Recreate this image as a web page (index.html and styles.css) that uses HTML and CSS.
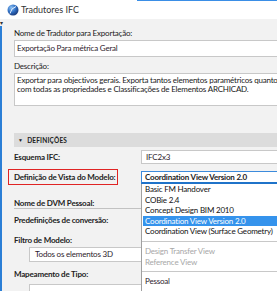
FILE: index.html
```html
<!DOCTYPE html>
<html lang="pt">
<head>
<meta charset="utf-8">
<title>Tradutores IFC</title>
<link rel="stylesheet" href="styles.css">
</head>
<body>
<div class="window">
  <div class="titlebar">
    <svg class="app-icon" width="12" height="12" viewBox="0 0 12 12">
      <defs>
        <radialGradient id="g" cx="0.35" cy="0.3" r="0.8">
          <stop offset="0" stop-color="#8fc3f5"/>
          <stop offset="0.5" stop-color="#2f6fc4"/>
          <stop offset="1" stop-color="#17306b"/>
        </radialGradient>
      </defs>
      <circle cx="6" cy="6" r="5.5" fill="url(#g)"/>
      <path d="M3 9.5 Q4 4 9 2.5" stroke="#e8f2ff" stroke-width="1" fill="none"/>
    </svg>
    <span class="title">Tradutores IFC</span>
  </div>
  <div class="body">
    <span class="corner">&#9662;</span>
    <div class="panel">
      <div class="label">Nome de Tradutor para Exportação:</div>
      <div class="field wide">Exportação Para métrica Geral</div>
      <div class="label lbl-desc">Descrição:</div>
      <div class="textarea">Exportar para objectivos gerais. Exporta tantos elementos paramétricos quanto<br>com todas as propriedades e Classificações de Elementos ARCHICAD.</div>

      <div class="section"><span class="tri">&#9660;</span>DEFINIÇÕES</div>

      <div class="row row-esq">
        <div class="label strong">Esquema IFC:</div>
        <div class="field side">IFC2x3</div>
      </div>
      <div class="row row-def">
        <div class="label strong highlight">Definição de Vista do Modelo:</div>
        <div class="select">Coordination View Version 2.0</div>
      </div>
      <div class="row row-dvm">
        <div class="label strong">Nome de DVM Pessoal:</div>
      </div>
      <div class="label strong lbl-pre">Predefinições de conversão:</div>
      <div class="label strong lbl-filtro">Filtro de Modelo:</div>
      <div class="field indented">Todos os elementos 3D</div>
      <div class="label strong lbl-map">Mapeamento de Tipo:</div>
      <div class="field indented last"></div>

      <ul class="menu">
        <li>Basic FM Handover</li>
        <li>COBie 2.4</li>
        <li>Concept Design BIM 2010</li>
        <li class="selected">Coordination View Version 2.0</li>
        <li>Coordination View (Surface Geometry)</li>
        <li class="sep"></li>
        <li class="disabled">Design Transfer View</li>
        <li class="disabled">Reference View</li>
        <li class="sep"></li>
        <li class="custom">Pessoal</li>
      </ul>
    </div>
  </div>
</div>
</body>
</html>
```

FILE: styles.css
```css
* { box-sizing: border-box; }
html, body {
  margin: 0;
  padding: 0;
  width: 277px;
  height: 291px;
  overflow: hidden;
  font-family: Lato, "Open Sans", sans-serif;
  font-size: 8px;
  letter-spacing: -0.2px;
  color: #1a1a1a;
}
.window {
  width: 277px;
  height: 291px;
  background: #f2f2f2;
  display: flex;
  flex-direction: column;
  overflow: hidden;
}
.titlebar {
  height: 19px;
  background: #ffffff;
  display: flex;
  align-items: center;
  padding-left: 7px;
  gap: 2px;
  position: relative;
  flex: none;
}
.titlebar::after {
  content: "";
  position: absolute;
  top: 0;
  left: 137px;
  right: 0;
  height: 1px;
  background: #3a8ee6;
}
.title {
  font-size: 9px;
  letter-spacing: 0;
  color: #333;
}
.body {
  flex: 1;
  position: relative;
  padding-left: 2px;
}
.body::before {
  content: "";
  position: absolute;
  left: 0;
  top: 7px;
  bottom: 0;
  width: 2px;
  background: #2b7fd6;
}
.corner {
  position: absolute;
  left: 0;
  top: 1px;
  font-size: 6px;
  color: #333;
  line-height: 1;
}
.panel {
  position: relative;
  padding: 9px 0 0 12px;
  width: 300px;
}
.label {
  height: 10px;
  line-height: 10px;
  white-space: nowrap;
}
.strong { font-weight: 700; color: #222; }
.field {
  background: #fff;
  border: 1px solid #c8c8c8;
  height: 17px;
  line-height: 15px;
  padding-left: 2px;
  white-space: nowrap;
  color: #2e1b2c;
}
.wide { margin-top: 2px; }
.lbl-desc { margin-top: 4px; }
.textarea {
  margin-top: 2px;
  background: #fff;
  border: 1px solid #c8c8c8;
  height: 33px;
  padding: 2px 2px 0 2px;
  line-height: 9px;
  white-space: nowrap;
  overflow: hidden;
}
.section {
  margin-top: 27px;
  height: 14px;
  background: #dcdcdc;
  line-height: 14px;
  font-weight: 700;
  font-size: 6.5px;
  letter-spacing: 0.2px;
  color: #222;
}
.tri {
  font-size: 5px;
  display: inline-block;
  margin: 0 4px 0 4px;
  vertical-align: 1px;
}
.row {
  display: flex;
  align-items: center;
  position: relative;
}
.row .label { width: 127px; }
.row-esq { margin-top: 2px; height: 15px; }
.side { flex: 1; height: 14px; line-height: 12px; padding-left: 4px; }
.row-def { margin-top: 6px; height: 14px; }
.row .highlight {
  position: relative;
  outline: 1.5px solid #e02424;
  outline-offset: -0.5px;
  margin-left: -5px;
  padding-left: 5px;
  height: 14px;
  line-height: 14px;
  width: 108px;
  margin-right: 24px;
}
.select {
  flex: 1;
  height: 13px;
  border: 1px solid #3c8bdc;
  border-bottom: 2px solid #1f73c9;
  background: #fff;
  line-height: 10px;
  padding-left: 3px;
  font-weight: 700;
  color: #222;
}
.row-dvm {
  margin-top: 13px;
  height: 12px;
  border-bottom: 1px solid #c2c2c2;
}
.lbl-pre { margin-top: 6px; }
.lbl-filtro { margin-top: 10px; }
.indented { margin-left: 15px; margin-top: 2px; height: 15px; line-height: 13px; padding-left: 5px; }
.lbl-map { margin-top: 7px; }
.last { margin-top: 5px; }
.menu {
  position: absolute;
  left: 139px;
  top: 165px;
  width: 160px;
  margin: 0;
  padding: 0 0 4px 0;
  list-style: none;
  background: #fff;
  border: 1px solid #a0a0a0;
  border-top: none;
}
.menu li {
  height: 10.6px;
  line-height: 10.6px;
  padding-left: 3px;
  white-space: nowrap;
  color: #111;
}
.menu li.selected {
  background: #3593ec;
  color: #fff;
  margin-left: 1px;
  padding-left: 2px;
}
.menu li.sep {
  height: 9px;
  position: relative;
}
.menu li.sep::after {
  content: "";
  position: absolute;
  left: 0;
  right: 0;
  top: 4px;
  height: 1px;
  background: #c8c8c8;
}
.menu li.disabled { color: #a8a8a8; }
.menu li.custom { color: #2e1b2c; }
```
